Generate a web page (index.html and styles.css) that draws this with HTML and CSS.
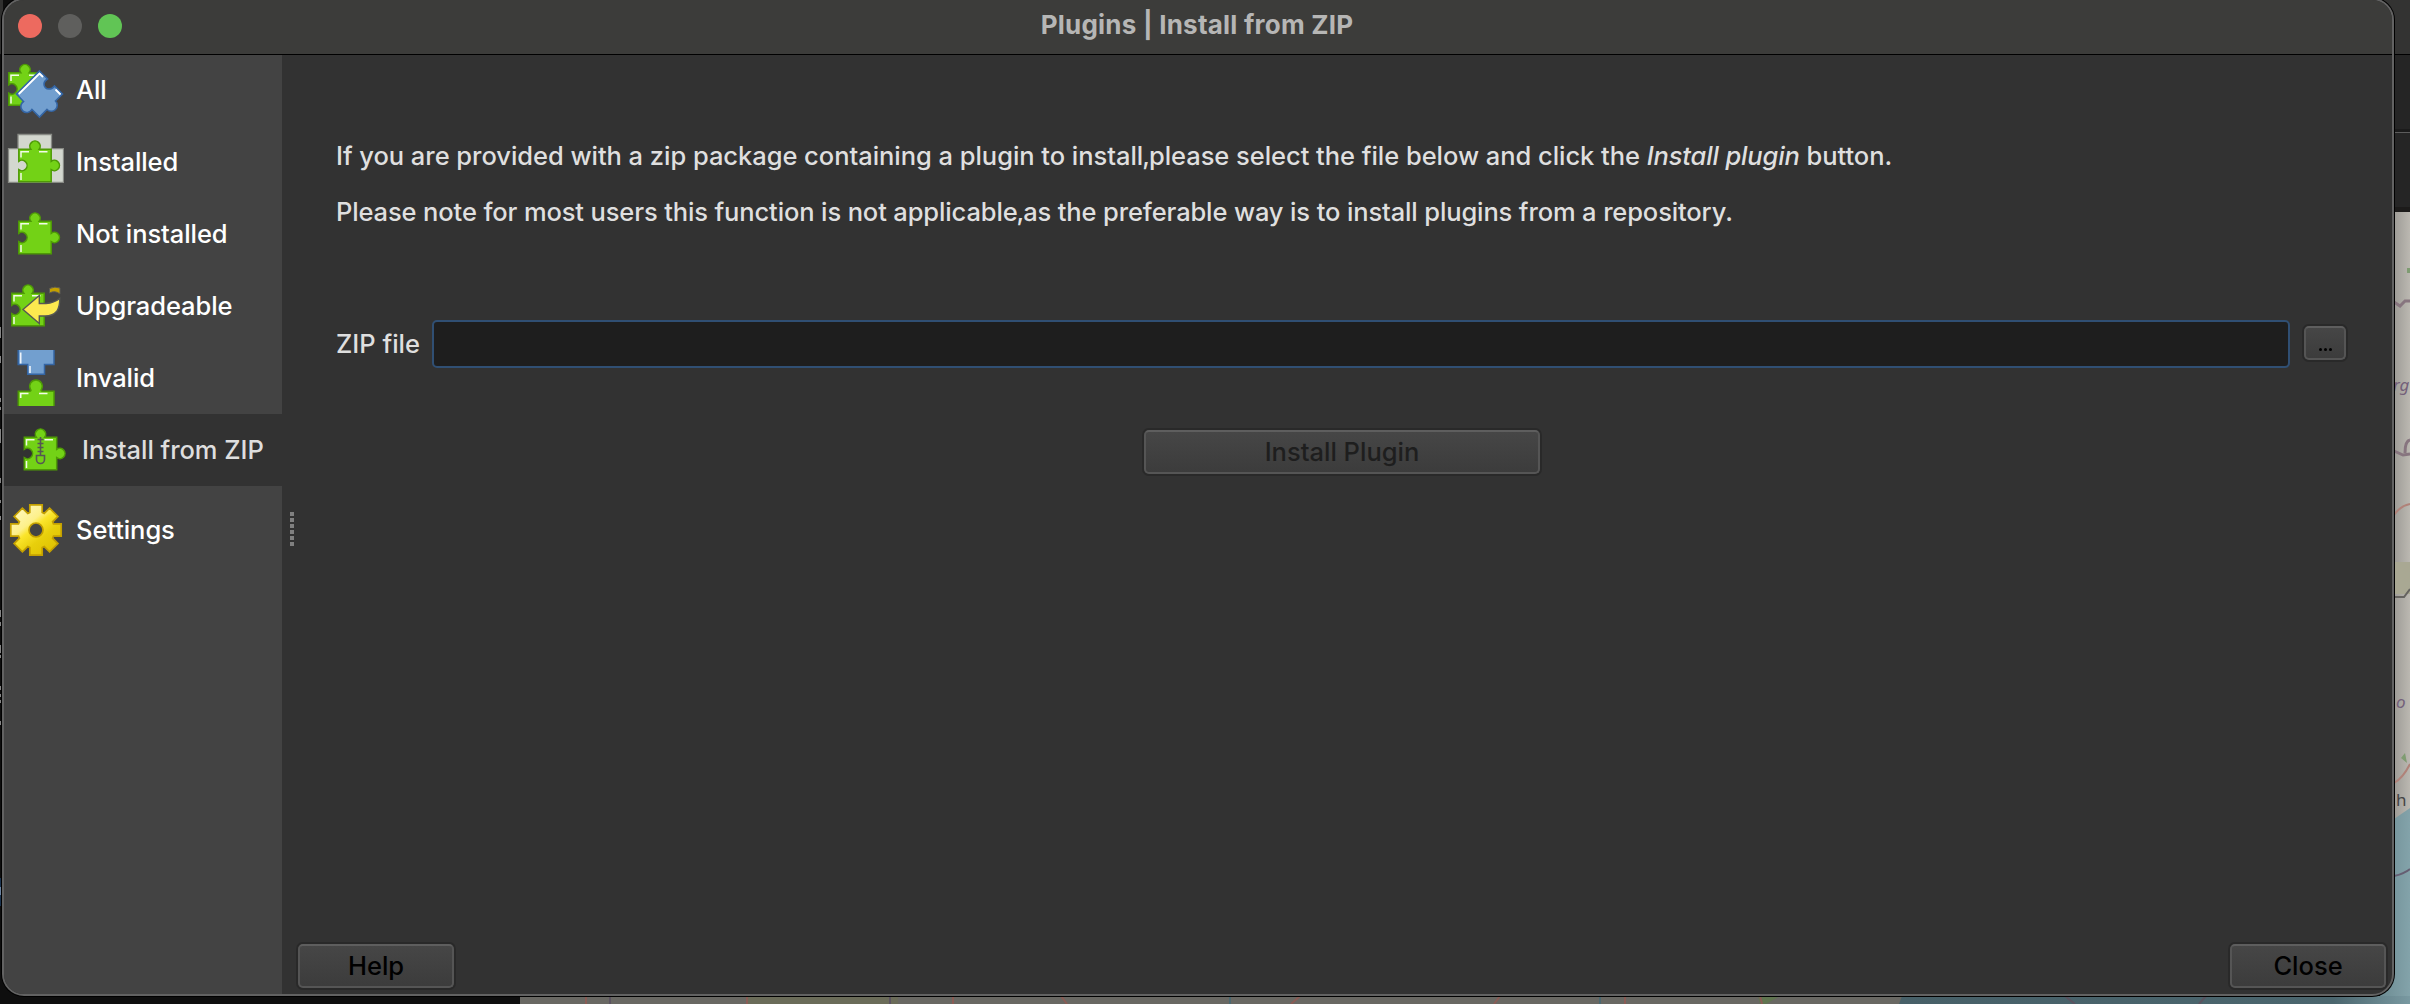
FILE: index.html
```html
<!DOCTYPE html>
<html lang="en">
<head>
<meta charset="utf-8">
<title>Plugins | Install from ZIP</title>
<link rel="stylesheet" href="styles.css">
</head>
<body>
<svg class="desktop" width="2410" height="1004" viewBox="0 0 2410 1004">
  <defs>
    <linearGradient id="land" x1="0" x2="1"><stop offset="0" stop-color="#9d9b96"/><stop offset="1" stop-color="#bbb8b1"/></linearGradient>
    <linearGradient id="sea" x1="0" x2="1"><stop offset="0" stop-color="#6d8c93"/><stop offset="1" stop-color="#83a3aa"/></linearGradient>
    <linearGradient id="shore" x1="0" x2="1"><stop offset="0" stop-color="#476068"/><stop offset=".85" stop-color="#4b666e"/><stop offset="1" stop-color="#7999a1"/></linearGradient>
  </defs>
  <rect width="2410" height="1004" fill="#0e0e0e"/>
  <rect width="3" height="54" fill="#30302f"/>
  <rect x="2380" width="30" height="54" fill="#333332"/>
  <rect x="2380" y="54" width="30" height="1" fill="#000"/>
  <rect x="2380" y="55" width="30" height="157" fill="#252525"/>
  <rect x="2380" y="129" width="30" height="3" fill="#1b1b1b"/>
  <rect x="2380" y="132" width="30" height="1" fill="#5c5c5c"/>
  <rect x="2380" y="207" width="30" height="5" fill="#1c1b1a"/>
  <rect x="2394" y="212" width="16" height="620" fill="url(#land)"/>
  <rect x="2394" y="562" width="16" height="32" fill="#a9a893"/>
  <path d="M2394 819L2410 808V1004H2380V980H2394z" fill="url(#sea)"/>
  <rect x="520" y="996" width="1382" height="8" fill="#696863"/>
  <path d="M748 996h150v8H748z" fill="#6b6c59"/>
  <path d="M1758 996h22l-14 8h-6z" fill="#607550"/>
  <path d="M1902 996H2410V1004H1899z" fill="url(#shore)"/>
  <g fill="none" stroke-width="2">
    <path d="M586 996v8M747 996v8M953 996v8M1061 996l6 8M1300 996l-9 8M1500 996l-6 8M1625 996v8M1760 996l2 8" stroke="#8a5c55"/>
    <path d="M610 996v8M890 996v8M2065 996l10 8M2206 996l-7 8" stroke="#5b5360"/>
    <path d="M1230 997v7M1600 997v7" stroke="#4b6870"/>
    <path d="M2394 302l6 4 5-5h5M2394 451l9 4 7-1M2405 453q0-12 5-13" stroke="#87757f" stroke-width="3"/>
    <path d="M2394 515q6-9 16-11M2394 783q9-5 16-19" stroke="#b08279"/>
    <path d="M2394 597h10l6-8" stroke="#65635f"/>
    <path d="M2394 876q10-2 16-7" stroke="#655e72"/>
  </g>
  <path d="M2401 758l4-5 2 10zM2407 268h3v5h-3z" fill="#7f9c72"/>
  <g class="map-label"><text x="2393" y="391">rg</text><text x="2396" y="708">o</text><text x="2396" y="806" class="town">h</text></g>
  <path d="M0 327h1v11H0zM0 356h1v7H0zM0 398h1v4H0zM0 407h1v3H0zM0 429h1v14H0zM0 478h1v5H0zM0 500h1v3H0zM0 516h1v4H0zM0 610h1v7H0zM0 622h1v4H0zM0 645h1v8H0zM0 655h1v3H0zM0 686h1v4H0zM0 694h1v3H0zM0 700h1v3H0zM0 721h1v4H0z" fill="#858585"/>
  <rect y="878" width="1" height="28" fill="#1b3450"/><rect y="887" width="1" height="8" fill="#6b83a0"/>
</svg>

<svg class="defs" width="0" height="0">
  <defs>
    <linearGradient id="gold" x1="0" y1="0" x2=".8" y2="1"><stop offset="0" stop-color="#fffbd0"/><stop offset=".4" stop-color="#fdf08a"/><stop offset=".5" stop-color="#fbe52c"/><stop offset=".7" stop-color="#e8cf0c"/><stop offset="1" stop-color="#dfc000"/></linearGradient>
    <g id="piece">
      <path d="M.8.8H12.800A5.200 5.200 0 1 1 21.200.8H33.200V12.800A5.200 5.200 0 1 1 33.200 21.200V33.200H.8V21.200A5.200 5.200 0 1 0 .8 12.800z" fill="#73d216" stroke="#4e9a06" stroke-width="1.500"/>
      <path d="M3 9V3.200H11M21 3.200H29.500M3 24.500V31.500" fill="none" stroke="#f2fbe8" stroke-width="1.500"/>
    </g>
    <g id="piece-flat">
      <path d="M.8.8H12.800A5.200 5.200 0 1 1 21.200.8H33.200V33.200H.8V21.200A5.200 5.200 0 1 0 .8 12.800z" fill="#73d216" stroke="#4e9a06" stroke-width="1.500"/>
      <path d="M3 9V3.200H11M21 3.200H29.500M3 24.500V31.500" fill="none" stroke="#f2fbe8" stroke-width="1.500"/>
    </g>
  </defs>
</svg>

<div class="window">
  <header class="titlebar">
    <div class="lights"><i class="light red"></i><i class="light gray"></i><i class="light green"></i></div>
    <h1 class="title">Plugins | Install from ZIP</h1>
  </header>
  <div class="body">
    <nav class="sidebar">
      <a class="item">
        <svg class="icon" viewBox="4 54 60 72">
          <use href="#piece-flat" x="8" y="72"/>
          <path d="M39.500 71L47.500 79C46 80 44 81 44 84A4.800 4.800 0 0 0 49 89C52 89 53.500 87.500 54.500 86L62.500 94L55.500 101A6 6 0 1 1 47 109.500L39.500 117L32 109.500A6 6 0 1 1 23.500 101.500L16.500 94z" fill="#729fcf" stroke="#3465a4" stroke-width="1.600"/>
          <path d="M18.800 94L39.500 73.500L43 77M55.500 89.500L60.500 94.500" fill="none" stroke="#fff" stroke-width="1.800"/>
        </svg><span class="label">All</span></a>
      <a class="item">
        <svg class="icon" viewBox="4 126 60 72">
          <path d="M8.500 148.700H18V134.500H51.500V148.700H63.500V182.300H8.500z" fill="#d3d7cf" stroke="#888a85" stroke-width="1.300"/>
          <use href="#piece" x="18" y="148.500"/>
        </svg><span class="label">Installed</span></a>
      <a class="item">
        <svg class="icon" viewBox="4 198 60 72"><use href="#piece" x="18" y="220.500"/></svg><span class="label">Not installed</span></a>
      <a class="item">
        <svg class="icon" viewBox="4 270 60 72">
          <use href="#piece-flat" x="11" y="292.500"/>
          <path d="M49.500 293V288.500Q55 286 60 288V294Q55 290 49.500 293z" fill="#c4a000" stroke="#5c5b55"/>
          <path d="M23 309.500L39.300 295.500V303.500H46Q54 303 59.700 298.500Q60 306 57 311Q53 316 45 316H39.300V323.500z" fill="#fce94f" stroke="#555753" stroke-width="1.400"/>
        </svg><span class="label">Upgradeable</span></a>
      <a class="item">
        <svg class="icon" viewBox="4 342 60 72">
          <path d="M18.200 350V364.500H27.700V374.300H44.500V364.500H54V350" fill="#729fcf" stroke="#3465a4" stroke-width="1.500"/>
          <path d="M20.700 352.500V363.500M30 366V373" fill="none" stroke="#eef4fa" stroke-width="1.600"/>
          <path d="M18.300 406V391.200H30C31.500 391 31 390 30.300 389A6.300 6.300 0 1 1 41.700 389C41 390 40.500 391 42 391.200H54V406" fill="#73d216" stroke="#4e9a06" stroke-width="1.500"/>
          <path d="M20.700 398V393.500H28.500M39 393.500H47.500" fill="none" stroke="#f2fbe8" stroke-width="1.600"/>
        </svg><span class="label">Invalid</span></a>
      <a class="item selected">
        <svg class="icon" viewBox="4 414 60 72">
          <use href="#piece" x="17.500" y="436.500"/>
          <path d="M34.500 437V455M31.500 439.500H37.500M31.500 443.500H37.500M31.500 447.500H37.500M31.500 451.500H37.500" stroke="#555753" stroke-width="1.600"/>
          <path d="M30.500 455.500H38.500V459.500A4 4 0 0 1 30.500 459.500z" fill="#73d216" stroke="#555753" stroke-width="1.600"/>
        </svg><span class="label">Install from ZIP</span></a>
      <a class="item settings">
        <svg class="icon" viewBox="4 494 60 72">
          <path fill-rule="evenodd" d="M29.800 504.800H42.200V512.500L44.200 513.400L49.600 508.200L57.900 516.400L52.600 521.800L53.500 523.900H61.200V536.100H53.500L52.600 538.200L57.900 543.600L49.600 551.800L44.200 546.600L42.200 547.500V555.200H29.800V547.500L27.800 546.600L22.400 551.800L14.100 543.600L19.400 538.200L18.500 536.100H10.800V523.900H18.500L19.400 521.800L14.100 516.400L22.400 508.200L27.800 513.400L29.800 512.500zM43 530A7 7 0 1 0 29 530A7 7 0 1 0 43 530z" fill="url(#gold)" stroke="#c4a000" stroke-width="1.700"/>
        </svg><span class="label">Settings</span></a>
    </nav>
    <div class="splitter"><i></i><i></i><i></i><i></i><i></i><i></i></div>
    <main class="content">
      <p class="text line1">If you are provided with a zip package containing a plugin to install<span class="comma">,</span>please select the file below and click the <em>Install plugin</em> button.</p>
      <p class="text line2">Please note for most users this function is not applicable<span class="comma">,</span>as the preferable way is to install plugins from a repository.</p>
      <div class="file-row">
        <label class="text file-label" for="zip">ZIP file</label>
        <input class="file-input" id="zip" type="text">
        <button class="button browse"><i></i><i></i><i></i></button>
      </div>
      <button class="button install" disabled><span>Install Plugin</span></button>
      <footer class="footer">
        <button class="button help"><span>Help</span></button>
        <button class="button close"><span>Close</span></button>
      </footer>
    </main>
  </div>
</div>
</body>
</html>
```
FILE: styles.css
```css
* { box-sizing: border-box; }
body {
  margin: 0;
  width: 2410px;
  height: 1004px;
  overflow: hidden;
  position: relative;
  background: #0e0e0e;
  font-family: Inter, "Liberation Sans", sans-serif;
  font-size: 25.5px;
}
.desktop, .defs { position: absolute; left: 0; top: 0; }
.map-label { font: italic 17px "Noto Sans", sans-serif; fill: #73607a; }
.map-label .town { font-style: normal; fill: #444; }

/* Dialog window */
.window {
  position: absolute;
  left: 2px;
  top: -2px;
  width: 2392px;
  height: 998px;
  border: 2px solid #626262;
  border-radius: 22px;
  box-shadow: 0 0 0 1px #000;
  background: #323232;
  overflow: hidden;
  display: flex;
  flex-direction: column;
}
.titlebar {
  height: 55px;
  flex: none;
  background: #3c3c3a;
  border-bottom: 1px solid #000;
  display: grid;
  grid-template-columns: 200px 1fr 200px;
}
.lights { display: flex; gap: 16px; padding: 14px 0 0 14px; }
.light { width: 24px; height: 24px; border-radius: 50%; }
.red { background: #ed6a5f; }
.gray { background: #5f5f5d; }
.green { background: #61c555; }
.title {
  margin: 0;
  padding: 9px 2px 0 0;
  text-align: center;
  font-size: 26px;
  line-height: 32px;
  font-weight: 700;
  letter-spacing: .22px;
  color: #b6b6b5;
  white-space: nowrap;
}

.body { flex: 1; display: flex; min-height: 0; }

/* Category list */
.sidebar {
  width: 278px;
  background: #434343;
  display: flex;
  flex-direction: column;
}
.item {
  height: 72px;
  display: flex;
  align-items: center;
  gap: 12px;
  color: #fff;
}
.item:first-child { height: 71px; }
.item:first-child .icon { margin-top: -1px; }
.selected { background: #323232; color: #dedede; padding-left: 6px; }
.settings { margin-top: 8px; }
.icon { width: 60px; height: 72px; flex: none; }
.label { line-height: 32px; margin-top: -1px; white-space: nowrap; font-weight: 500; letter-spacing: -.08px; }
.selected .label { font-weight: 450; letter-spacing: -.05px; }

.splitter {
  width: 16px;
  padding: 457px 0 0 8px;
  display: flex;
  flex-direction: column;
  gap: 2px;
}
.splitter i { width: 4px; height: 4px; background: #808080; }

/* Page */
.content {
  flex: 1;
  display: flex;
  flex-direction: column;
  padding: 85px 6px 6px 0;
}
.text { margin: 0 0 0 38px; line-height: 32px; color: #dfdfdf; white-space: nowrap; font-weight: 450; }
.text em { font-weight: 500; letter-spacing: -.15px; }
.line1 { letter-spacing: -.04px; }
.line2 { margin-top: 24px; letter-spacing: -.13px; }
.comma { margin: 0 -1px; }
.file-row { display: flex; align-items: center; margin-top: 92px; height: 48px; }
.file-label { width: 96px; }
.file-input {
  width: 1858px;
  height: 48px;
  border: 2px solid #304f73;
  border-radius: 5px;
  background: #1e1e1e;
  outline: none;
  color: #dfdfdf;
}
.button {
  padding: 0;
  border: 2px solid #555;
  border-top-color: #5e5e5e;
  border-radius: 5px;
  box-shadow: 0 0 0 2px #292929;
  background: linear-gradient(#464646, #3c3c3c);
  font: 500 25.5px/32px Inter, "Liberation Sans", sans-serif;
  color: #000;
  display: flex;
  justify-content: center;
  align-items: center;
}
.browse { width: 42px; height: 34px; margin: -2px 0 0 14px; gap: 2px; padding-top: 13px; }
.browse i { width: 3px; height: 3px; border-radius: 50%; background: #000; }
.install { width: 396px; height: 44px; margin: 62px 0 0 846px; font-weight: 450; color: #1e1e1e; }
.footer { margin-top: auto; display: flex; justify-content: space-between; }
.help, .close { width: 156px; height: 44px; }
```
